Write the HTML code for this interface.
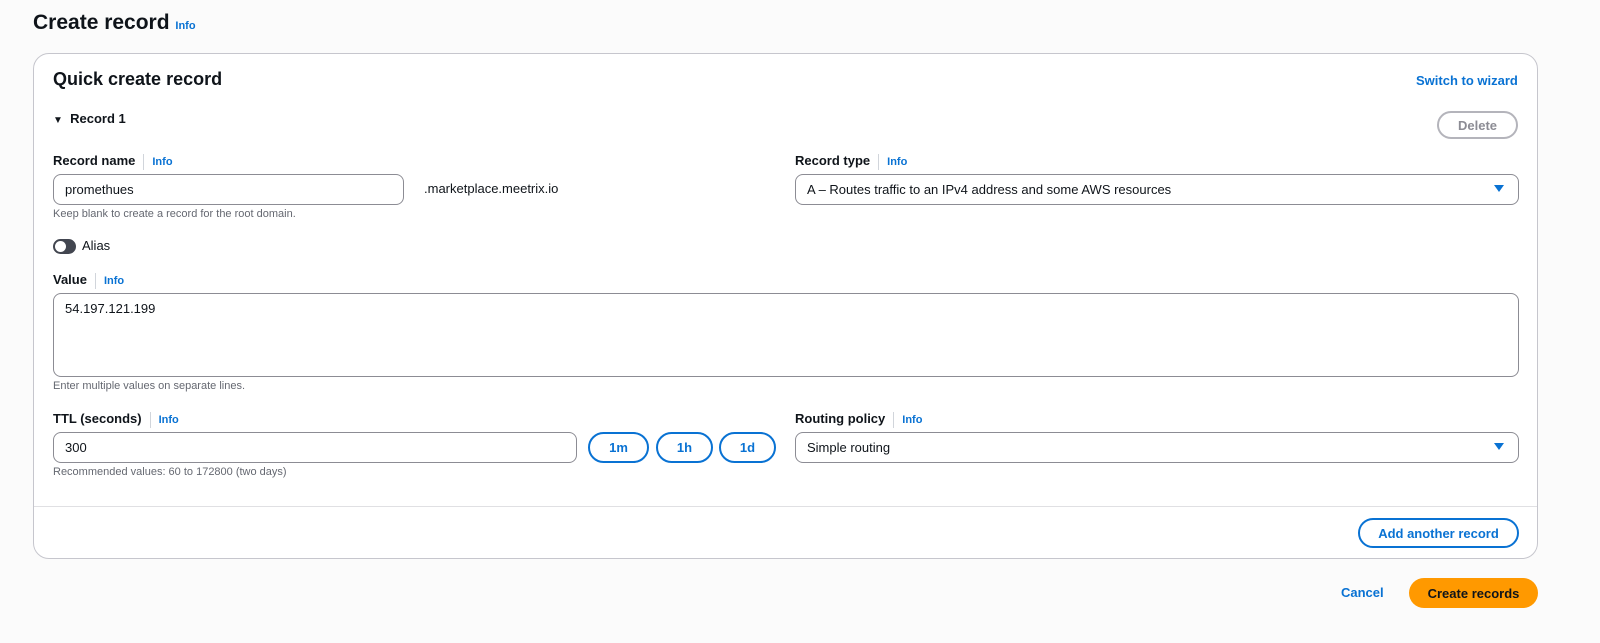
<!DOCTYPE html>
<html><head><style>
*{box-sizing:border-box;margin:0;padding:0}
body{width:1600px;height:643px;background:#fbfbfb;font-family:"Liberation Sans",sans-serif;color:#0f141a;position:relative;overflow:hidden;font-size:13px}
.a{position:absolute;white-space:nowrap}
.b{font-weight:bold}
.info{color:#0972d3;font-weight:bold;font-size:11px}
.lab{font-weight:bold;font-size:13px}
.sep{display:inline-block;width:1px;height:16px;background:#d1d5db;vertical-align:middle;margin:0 8px}
.inp{position:absolute;border:1px solid #8c8c94;border-radius:8px;background:#fff;padding:0 0 0 11px;font-size:13px;display:flex;align-items:center}
.hint{color:#656871;font-size:11px}
.pill{position:absolute;border:2px solid #0972d3;border-radius:20px;color:#0972d3;font-weight:bold;font-size:13px;display:flex;align-items:center;justify-content:center;background:#fff}
.tri{position:absolute;width:0;height:0;border-left:5px solid transparent;border-right:5px solid transparent;border-top:7px solid #0972d3}
</style></head><body>
<div class="a b" style="left:33px;top:11px;font-size:21px">Create record <span class="info">Info</span></div>
<div class="a" style="left:33px;top:53px;width:1505px;height:506px;background:#fff;border:1px solid #c6c6cd;border-radius:16px"></div>
<div class="a" style="left:34px;top:506px;width:1503px;height:1px;background:#e0e0e3"></div>
<div class="a b" style="left:53px;top:69px;font-size:18px">Quick create record</div>
<div class="a info" style="left:1416px;top:73px;font-size:13px">Switch to wizard</div>
<div class="a b" style="left:53px;top:111px;font-size:13px"><span style="font-size:10px">▼</span>&nbsp; Record 1</div>
<div class="pill" style="left:1437px;top:111px;width:81px;height:28px;border-color:#b4b4bb;color:#8c8c94">Delete</div>

<div class="a lab" style="left:53px;top:153px">Record name<span class="sep"></span><span class="info">Info</span></div>
<div class="inp" style="left:53px;top:174px;width:351px;height:31px">promethues</div>
<div class="a" style="left:424px;top:181px">.marketplace.meetrix.io</div>
<div class="a hint" style="left:53px;top:208px">Keep blank to create a record for the root domain.</div>
<div class="a lab" style="left:795px;top:153px">Record type<span class="sep"></span><span class="info">Info</span></div>
<div class="inp" style="left:795px;top:174px;width:724px;height:31px">A – Routes traffic to an IPv4 address and some AWS resources</div>
<div class="tri" style="left:1494px;top:185px"></div>

<div class="a" style="left:53px;top:239px;width:23px;height:15px;border-radius:8px;background:#424650"><div style="position:absolute;left:2px;top:2px;width:11px;height:11px;border-radius:6px;background:#fff"></div></div>
<div class="a" style="left:82px;top:238px">Alias</div>

<div class="a lab" style="left:53px;top:272px">Value<span class="sep"></span><span class="info">Info</span></div>
<div class="inp" style="left:53px;top:293px;width:1466px;height:84px;align-items:flex-start;padding-top:7px">54.197.121.199</div>
<div class="a hint" style="left:53px;top:380px">Enter multiple values on separate lines.</div>

<div class="a lab" style="left:53px;top:411px">TTL (seconds)<span class="sep"></span><span class="info">Info</span></div>
<div class="inp" style="left:53px;top:432px;width:524px;height:31px">300</div>
<div class="pill" style="left:588px;top:432px;width:61px;height:31px">1m</div>
<div class="pill" style="left:656px;top:432px;width:57px;height:31px">1h</div>
<div class="pill" style="left:719px;top:432px;width:57px;height:31px">1d</div>
<div class="a hint" style="left:53px;top:466px">Recommended values: 60 to 172800 (two days)</div>
<div class="a lab" style="left:795px;top:411px">Routing policy<span class="sep"></span><span class="info">Info</span></div>
<div class="inp" style="left:795px;top:432px;width:724px;height:31px">Simple routing</div>
<div class="tri" style="left:1494px;top:443px"></div>

<div class="pill" style="left:1358px;top:518px;width:161px;height:30px">Add another record</div>
<div class="a info" style="left:1341px;top:585px;font-size:13px">Cancel</div>
<div class="a b" style="left:1409px;top:578px;width:129px;height:30px;border-radius:15px;background:#ff9900;display:flex;align-items:center;justify-content:center;font-size:13px">Create records</div>
</body></html>
